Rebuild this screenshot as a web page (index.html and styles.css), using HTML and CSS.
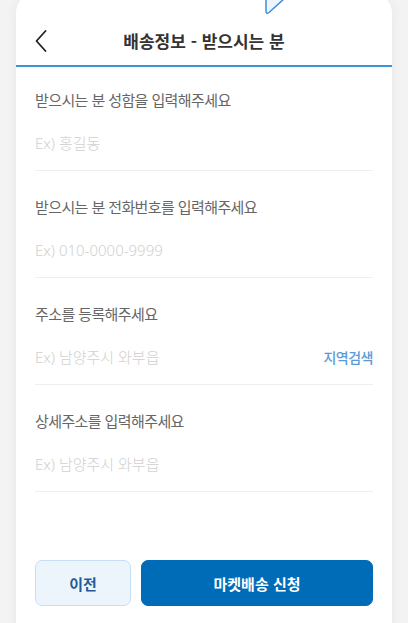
FILE: index.html
```html
<!DOCTYPE html>
<html lang="ko">
<head>
    <meta charset="UTF-8">
    <meta name="viewport" content="width=device-width, initial-scale=1.0">
    <title>배송정보 - 받으시는 분</title>
    <link rel="stylesheet" href="styles.css">
</head>
<body>
    <div class="sheet">
        <!-- tooltip tail peeking over the top edge -->
        <svg class="tip-tail" width="26" height="16" viewBox="0 0 26 16">
            <path d="M3 -2 L3 11 Q3 14.5 6 12.5 L22 -2" fill="#eef5fd" stroke="#3a8fd8" stroke-width="1.5" stroke-linejoin="round"/>
        </svg>

        <header class="sheet-header">
            <button class="back-button" aria-label="뒤로">
                <svg width="14" height="22" viewBox="0 0 14 22">
                    <polyline points="11.5,1 2.5,11 11.5,21" fill="none" stroke="#222" stroke-width="1.8" stroke-linecap="round" stroke-linejoin="round"/>
                </svg>
            </button>
            <h1 class="sheet-title">배송정보 - 받으시는 분</h1>
        </header>

        <form class="form">
            <div class="field">
                <label for="nameInput">받으시는 분 성함을 입력해주세요</label>
                <div class="field-row">
                    <input type="text" id="nameInput" placeholder="Ex) 홍길동">
                </div>
            </div>
            <div class="field">
                <label for="phoneInput">받으시는 분 전화번호를 입력해주세요</label>
                <div class="field-row">
                    <input type="text" id="phoneInput" placeholder="Ex) 010-0000-9999">
                </div>
            </div>
            <div class="field">
                <label for="addressInput">주소를 등록해주세요</label>
                <div class="field-row">
                    <input type="text" id="addressInput" placeholder="Ex) 남양주시 와부읍">
                    <a class="search-link" href="#">지역검색</a>
                </div>
            </div>
            <div class="field">
                <label for="detailInput">상세주소를 입력해주세요</label>
                <div class="field-row">
                    <input type="text" id="detailInput" placeholder="Ex) 남양주시 와부읍">
                </div>
            </div>

            <div class="actions">
                <button type="button" class="btn btn-prev">이전</button>
                <button type="button" class="btn btn-submit">마켓배송 신청</button>
            </div>
        </form>
    </div>
</body>
</html>
```

FILE: styles.css
```css
body {
    margin: 0;
    background-color: #f3f3f3;
    font-family: "Noto Sans CJK KR", "Noto Sans", sans-serif;
    overflow: hidden;
}
.sheet {
    position: relative;
    margin: -7px 16px 0;
    padding-top: 7px;
    min-height: 640px;
    background-color: white;
    border-radius: 20px 20px 0 0;
    box-shadow: 0 0 12px rgba(0, 0, 0, 0.05);
}
.tip-tail {
    position: absolute;
    top: 7px;
    left: 247px;
}
.sheet-header {
    position: relative;
    display: flex;
    align-items: center;
    justify-content: center;
    height: 22px;
    padding: 30px 0 13px;
    border-bottom: 2px solid #3d95d9;
}
.back-button {
    position: absolute;
    left: 18px;
    top: 30px;
    padding: 0;
    border: none;
    background: none;
    display: flex;
}
.sheet-title {
    margin: 0;
    font-size: 17px;
    font-weight: 700;
    color: #333;
    line-height: 22px;
}
.form {
    padding: 0 19px;
}
.field {
    padding: 25px 0 16px;
    border-bottom: 1px solid #eee;
}
.field:first-child {
    padding-top: 22px;
}
.field label {
    display: block;
    font-size: 15px;
    line-height: 22px;
    color: #666;
    letter-spacing: -0.6px;
}
.field-row {
    display: flex;
    align-items: center;
    margin-top: 21px;
}
.field-row input {
    flex: 1;
    min-width: 0;
    padding: 0;
    border: none;
    outline: none;
    font-family: "Noto Sans", "Noto Sans CJK KR", sans-serif;
    font-size: 15px;
    font-weight: 300;
    line-height: 22px;
    height: 22px;
    color: #333;
}
.field-row input::placeholder {
    color: #d0d0d0;
}
.search-link {
    font-size: 14px;
    font-weight: 500;
    color: #5b9bd5;
    text-decoration: none;
    letter-spacing: -0.5px;
}
.actions {
    display: flex;
    gap: 10px;
    margin-top: 68px;
}
.btn {
    height: 46px;
    border-radius: 7px;
    font-family: inherit;
    font-size: 15px;
    font-weight: 700;
    cursor: pointer;
}
.btn-prev {
    width: 96px;
    background-color: #edf5fc;
    border: 1px solid #c6dff7;
    color: #1f5c9a;
}
.btn-submit {
    flex: 1;
    background-color: #006cb8;
    border: 1px solid #006cb8;
    color: white;
}
```
